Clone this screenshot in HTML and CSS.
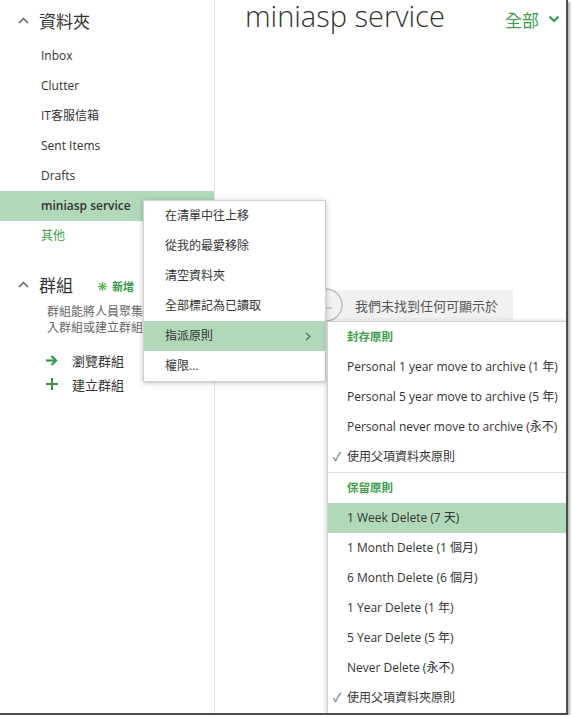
FILE: index.html
```html
<!DOCTYPE html>
<html lang="zh-Hant">
<head>
    <meta charset="UTF-8">
    <title>miniasp service</title>
    <link rel="stylesheet" href="styles.css">
</head>
<body>
<div class="shot">
    <aside class="sidebar">
        <div class="sec-head">
            <svg class="chev" width="11" height="7" viewBox="0 0 11 7"><polyline points="1,6 5.5,1.5 10,6" fill="none" stroke="#555" stroke-width="1.4"/></svg>
            <span>資料夾</span>
        </div>
        <ul class="folders">
            <li>Inbox</li>
            <li>Clutter</li>
            <li>IT客服信箱</li>
            <li>Sent Items</li>
            <li>Drafts</li>
            <li class="current">miniasp service</li>
            <li class="more">其他</li>
        </ul>

        <div class="sec-head groups">
            <svg class="chev" width="11" height="7" viewBox="0 0 11 7"><polyline points="1,6 5.5,1.5 10,6" fill="none" stroke="#555" stroke-width="1.4"/></svg>
            <span>群組</span>
            <span class="add">
                <svg width="9" height="9" viewBox="0 0 9 9"><g stroke="#5cb85c" stroke-width="1.3"><line x1="4.5" y1="0" x2="4.5" y2="9"/><line x1="0" y1="4.5" x2="9" y2="4.5"/><line x1="1.3" y1="1.3" x2="7.7" y2="7.7"/><line x1="7.7" y1="1.3" x2="1.3" y2="7.7"/></g></svg>
                新增
            </span>
        </div>
        <p class="desc">群組能將人員聚集在一起。加入群組或建立群組以開始。</p>
        <div class="links">
            <div class="link">
                <svg width="12" height="11" viewBox="0 0 12 11"><g fill="none" stroke="#2e9a45" stroke-width="2.2"><line x1="0" y1="5.5" x2="10" y2="5.5"/><polyline points="5.5,1 10,5.5 5.5,10"/></g></svg>
                <span>瀏覽群組</span>
            </div>
            <div class="link">
                <svg width="12" height="12" viewBox="0 0 12 12"><g stroke="#2e9a45" stroke-width="2"><line x1="6" y1="0" x2="6" y2="12"/><line x1="0" y1="6" x2="12" y2="6"/></g></svg>
                <span>建立群組</span>
            </div>
        </div>
    </aside>

    <main class="main">
        <div class="main-head">
            <h1>miniasp service</h1>
            <div class="filter">全部
                <svg width="12" height="8" viewBox="0 0 12 8"><polyline points="1.5,1.5 6,6 10.5,1.5" fill="none" stroke="#3d9c4c" stroke-width="2.2"/></svg>
            </div>
        </div>
        <div class="empty">
            <svg class="empty-icon" width="36" height="36" viewBox="0 0 36 36"><circle cx="18" cy="18" r="16" fill="none" stroke="#bbb" stroke-width="1.3"/><line x1="12" y1="21" x2="24" y2="21" stroke="#bbb" stroke-width="1.3"/></svg>
            <span>我們未找到任何可顯示於</span>
        </div>
    </main>

    <div class="menu ctx">
        <div class="item">在清單中往上移</div>
        <div class="item">從我的最愛移除</div>
        <div class="item">清空資料夾</div>
        <div class="item">全部標記為已讀取</div>
        <div class="item on">指派原則
            <svg class="arrow" width="6" height="9" viewBox="0 0 6 9"><polyline points="1,1 5,4.5 1,8" fill="none" stroke="#666" stroke-width="1.2"/></svg>
        </div>
        <div class="item">權限...</div>
    </div>

    <div class="menu sub">
        <div class="item label">封存原則</div>
        <div class="item">Personal 1 year move to archive (1 年)</div>
        <div class="item">Personal 5 year move to archive (5 年)</div>
        <div class="item">Personal never move to archive (永不)</div>
        <div class="item checked">使用父項資料夾原則</div>
        <div class="sep"></div>
        <div class="item label">保留原則</div>
        <div class="item on">1 Week Delete (7 天)</div>
        <div class="item">1 Month Delete (1 個月)</div>
        <div class="item">6 Month Delete (6 個月)</div>
        <div class="item">1 Year Delete (1 年)</div>
        <div class="item">5 Year Delete (5 年)</div>
        <div class="item">Never Delete (永不)</div>
        <div class="item checked">使用父項資料夾原則</div>
    </div>
</div>
</body>
</html>
```

FILE: styles.css
```css
body {
    margin: 0;
    font-family: "Open Sans", "Noto Sans CJK TC", sans-serif;
    color: #333;
}
.shot {
    width: 566px;
    height: 713px;
    border-right: 2px solid #4c4c4c;
    border-bottom: 2px solid #4c4c4c;
    box-shadow: 2px 2px 2px rgba(0, 0, 0, 0.3);
    position: relative;
    overflow: hidden;
    display: flex;
    background: #fff;
}

/* 左邊欄 */
.sidebar {
    width: 214px;
    flex: none;
    border-right: 1px solid #e3e3e3;
}
.sec-head {
    display: flex;
    align-items: center;
    height: 41px;
    padding-left: 18px;
    font-size: 17px;
}
.sec-head .chev {
    margin-right: 10px;
}
.folders {
    list-style: none;
    margin: 0;
    padding: 0;
}
.folders li {
    height: 30px;
    line-height: 30px;
    padding-left: 41px;
    font-size: 12px;
}
.folders .current {
    background: #b1d9b9;
    font-weight: 600;
}
.folders .more {
    color: #3d9c4c;
}
.groups {
    margin-top: 13px;
    height: 40px;
}
.add {
    margin-left: 25px;
    font-size: 11px;
    font-weight: 700;
    color: #2e9a45;
    display: flex;
    align-items: center;
    gap: 5px;
    padding-top: 4px;
}
.desc {
    margin: 0;
    padding: 0 8px 0 47px;
    font-size: 12px;
    line-height: 16px;
    color: #666;
}
.links {
    margin-top: 12px;
}
.link {
    display: flex;
    align-items: center;
    height: 24px;
    padding-left: 46px;
    font-size: 13px;
}
.link span {
    margin-left: 14px;
}

/* 主畫面 */
.main {
    flex: 1;
}
.main-head {
    display: flex;
    justify-content: space-between;
    align-items: center;
    padding: 0 6px 0 30px;
    height: 32px;
}
.main-head h1 {
    margin: 0;
    font-size: 29px;
    line-height: 32px;
    font-weight: 300;
    color: #333;
}
.filter {
    color: #3d9c4c;
    font-size: 17px;
    display: flex;
    align-items: center;
    gap: 9px;
    padding-top: 6px;
}
.empty {
    margin-top: 258px;
    width: 298px;
    height: 30px;
    background: #f1f1f1;
    display: flex;
    align-items: center;
    padding-left: 93px;
    box-sizing: border-box;
    font-size: 13px;
    color: #555;
    white-space: nowrap;
}
.empty-icon {
    flex: none;
    margin-right: 11px;
}

/* 右鍵選單 */
.menu {
    position: absolute;
    background: #fff;
    border: 1px solid #d0d0d0;
    box-shadow: 0 1px 5px rgba(0, 0, 0, 0.25);
}
.menu .item {
    position: relative;
    height: 30px;
    line-height: 30px;
    font-size: 12px;
    white-space: nowrap;
}
.menu .on {
    background: #b1d9b9;
}
.ctx {
    left: 143px;
    top: 200px;
    width: 181px;
}
.ctx .item {
    padding-left: 21px;
}
.ctx .arrow {
    position: absolute;
    right: 14px;
    top: 11px;
}
.sub {
    left: 327px;
    top: 321px;
    width: 260px;
}
.sub .item {
    padding-left: 19px;
}
.sub .label {
    color: #3d9c4c;
    font-weight: 700;
    font-size: 11.5px;
}
.sub .checked::before {
    content: "\2713";
    position: absolute;
    left: 5px;
    color: #666;
    font-size: 12px;
}
.sep {
    height: 1px;
    background: #e0e0e0;
    margin: 0;
}
```
